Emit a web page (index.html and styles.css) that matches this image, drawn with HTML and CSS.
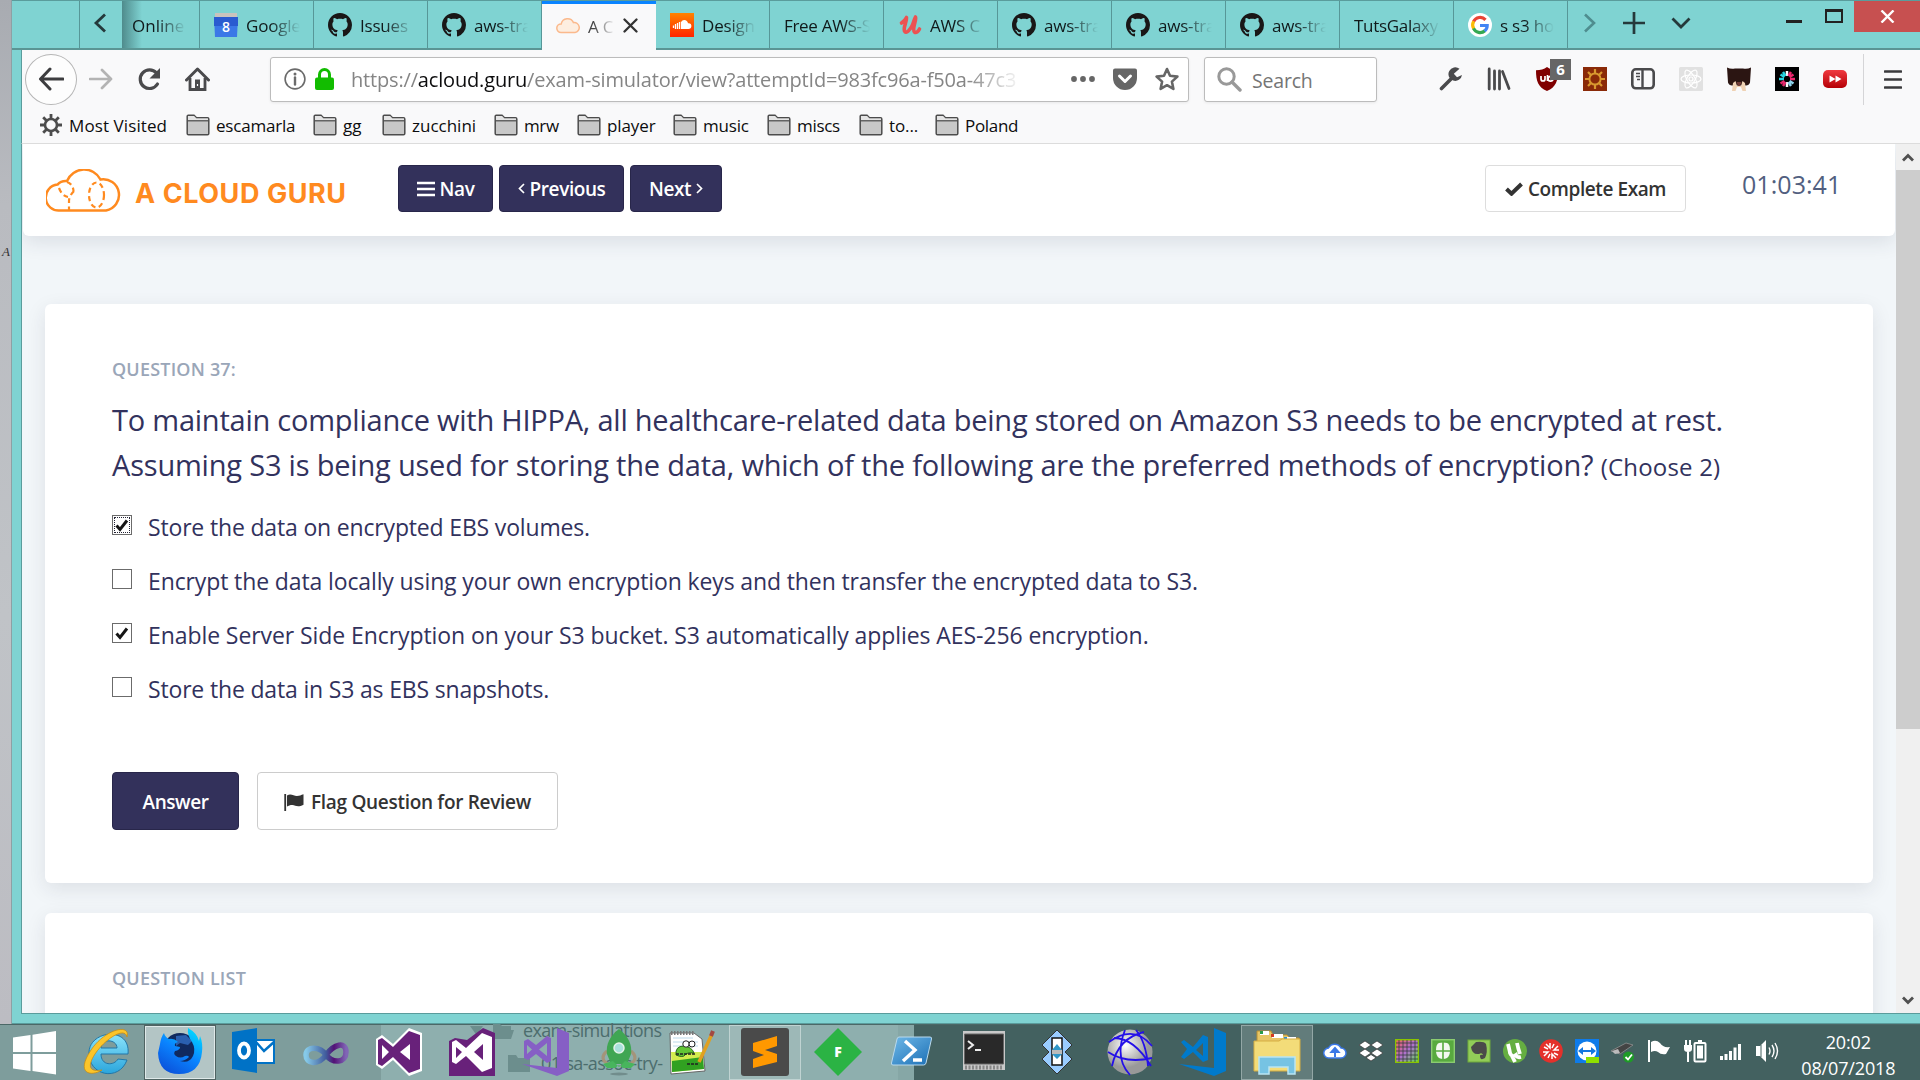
FILE: index.html
```html
<!DOCTYPE html>
<html lang="en">
<head>
<meta charset="utf-8">
<title>A Cloud Guru</title>
<link rel="stylesheet" href="styles.css">
</head>
<body>
<svg class="defs" width="0" height="0">
  <symbol id="github" viewBox="0 0 16 16"><path fill="#191717" d="M8 0C3.58 0 0 3.58 0 8c0 3.54 2.29 6.53 5.47 7.59.4.07.55-.17.55-.38 0-.19-.01-.82-.01-1.49-2.01.37-2.53-.49-2.69-.94-.09-.23-.48-.94-.82-1.13-.28-.15-.68-.52-.01-.53.63-.01 1.08.58 1.23.82.72 1.21 1.87.87 2.33.66.07-.52.28-.87.51-1.07-1.78-.2-3.64-.89-3.64-3.95 0-.87.31-1.59.82-2.15-.08-.2-.36-1.02.08-2.12 0 0 .67-.21 2.2.82.64-.18 1.32-.27 2-.27s1.36.09 2 .27c1.53-1.04 2.2-.82 2.2-.82.44 1.1.16 1.92.08 2.12.51.56.82 1.27.82 2.15 0 3.07-1.87 3.75-3.65 3.95.29.25.54.73.54 1.48 0 1.07-.01 1.93-.01 2.2 0 .21.15.46.55.38A8.01 8.01 0 0 0 16 8c0-4.42-3.58-8-8-8z"/></symbol>
  <symbol id="folder" viewBox="0 0 24 22"><path d="M1.2 19.5V2.2Q1.200 1.200 2.200 1.200H8l2.500 2.600H21.500q1.300 0 1.300 1.300V19.500q0 1.300-1.300 1.300H2.500q-1.300 0-1.300-1.300z" fill="#c8c8c8" stroke="#4c4c4c" stroke-width="1.500"/><path d="M2 2h6l2.500 2.600H22V6H2z" fill="#e4e4e4"/><path d="M1.500 6.800h21" stroke="#4c4c4c" stroke-width="1.200"/></symbol>
</svg>
<div class="screen">
  <div class="desktop"><span class="desktop-label">A</span></div>
  <main class="window">
    <div class="tabbar">
      <div class="tab-lead"></div>
      <div class="tab-scroll"><svg width="14" height="20" viewBox="0 0 14 20"><path d="M12 1.500L3 10l9 8.500" fill="none" stroke="#25393b" stroke-width="2.800"/></svg></div>
      <div class="tab tab-cut"><span class="tab-text">Online</span></div>
      <div class="tab"><svg class="fav" viewBox="0 0 24 24"><path d="M1 0h22v6H1z" fill="#c9c3bd"/><path d="M0 4h24l-1 20H1z" fill="#3b78e7"/><path d="M0 4h24v9H0z" fill="#2a5bd0"/><text x="12" y="19" font-size="14" font-weight="600" text-anchor="middle" fill="#fff">8</text></svg><span class="tab-text">Google</span></div>
      <div class="tab"><svg class="fav"><use href="#github"/></svg><span class="tab-text">Issues</span></div>
      <div class="tab"><svg class="fav"><use href="#github"/></svg><span class="tab-text">aws-tra</span></div>
      <div class="tab active"><svg class="fav" viewBox="0 0 24 24"><path d="M5 18.500a4.300 4.300 0 0 1 .2-8.600 6.500 6.500 0 0 1 12.300-1.300A5 5 0 0 1 19 18.500z" fill="#fdeee0" stroke="#fbb98c" stroke-width="1.500"/></svg><span class="tab-text">A C</span><svg class="tab-close" width="15" height="15" viewBox="0 0 15 15"><path d="M1.500 1.500l12 12M13.500 1.500l-12 12" stroke="#333" stroke-width="2.300" stroke-linecap="round"/></svg></div>
      <div class="tab"><svg class="fav" viewBox="0 0 24 24"><defs><linearGradient id="sc" x2="0" y2="1"><stop stop-color="#ff8300"/><stop offset="1" stop-color="#ff2500"/></linearGradient></defs><path d="M0 0h24v24H0z" fill="url(#sc)"/><path d="M3.500 12.500V15M5.500 11v5M7.500 10v6M9.500 9v7M11.500 8.500V16" stroke="#fff" stroke-width="1.300"/><path d="M12 16V7.700c3-1.700 5.700.2 6 2.600 2.300-.4 3.400 1.100 3.400 2.600 0 1.800-1.200 3.100-3 3.100z" fill="#fff"/></svg><span class="tab-text">Design</span></div>
      <div class="tab"><span class="tab-text wide">Free AWS-S</span></div>
      <div class="tab"><svg class="fav" viewBox="0 0 24 24"><path d="M3.500 10C6.500 8 8 5.500 8.500 4.500 9 9 5 14 6.500 18c1.500 3.500 6-1.500 8-6 1-3 2-6 3-8 1.500 2-4 12-1 15 1.800 1.500 4-1 5-3" fill="none" stroke="#ec5252" stroke-width="3.600" stroke-linecap="round" stroke-linejoin="round"/></svg><span class="tab-text">AWS C</span></div>
      <div class="tab"><svg class="fav"><use href="#github"/></svg><span class="tab-text">aws-tra</span></div>
      <div class="tab"><svg class="fav"><use href="#github"/></svg><span class="tab-text">aws-tra</span></div>
      <div class="tab"><svg class="fav"><use href="#github"/></svg><span class="tab-text">aws-tra</span></div>
      <div class="tab"><span class="tab-text wide">TutsGalaxy</span></div>
      <div class="tab"><svg class="fav" viewBox="0 0 24 24"><circle cx="12" cy="12" r="12" fill="#fff"/><g fill="none" stroke-width="3.200"><path d="M17.500 6.800A7.300 7.300 0 0 0 5.500 8.700" stroke="#ea4335"/><path d="M5.700 8.300a7.400 7.400 0 0 0 0 7.400" stroke="#fbbc05"/><path d="M5.500 15.400a7.300 7.300 0 0 0 11.400 2.300" stroke="#34a853"/><path d="M16.600 17.900a7 7 0 0 0 2.600-5.400H12" stroke="#4285f4"/></g></svg><span class="tab-text">s s3 ho</span></div>
      <div class="tab-tools">
        <svg width="14" height="20" viewBox="0 0 14 20"><path d="M2 1.500l9 8.500-9 8.500" fill="none" stroke="#4f8d8f" stroke-width="2.600"/></svg>
        <svg width="22" height="22" viewBox="0 0 22 22"><path d="M11 0v22M0 11h22" stroke="#25393b" stroke-width="2.700"/></svg>
        <svg width="20" height="12" viewBox="0 0 20 12"><path d="M1.500 1.500l8.500 8.500 8.500-8.500" fill="none" stroke="#25393b" stroke-width="2.800"/></svg>
      </div>
      <div class="caption">
        <svg width="18" height="24" viewBox="0 0 18 24"><path d="M0 19h16v3H0z" fill="#222"/></svg>
        <svg width="18" height="24" viewBox="0 0 18 24"><path d="M1 9.500h16v11.500H1z" fill="none" stroke="#222" stroke-width="2"/><path d="M0 8h18v3H0z" fill="#222"/></svg>
        <div class="close"><svg width="15" height="13" viewBox="0 0 15 13"><path d="M1.500.500l12 12M13.500.500l-12 12" stroke="#fff" stroke-width="2.400"/></svg></div>
      </div>
    </div>

    <div class="toolbar">
      <div class="nav-icons">
        <div class="back"><svg width="26" height="24" viewBox="0 0 26 24"><path d="M25 12H3M12 2L2.500 12l9.500 10" fill="none" stroke="#3d3d3f" stroke-width="3" stroke-linecap="round" stroke-linejoin="round"/></svg></div>
        <svg width="24" height="22" viewBox="0 0 24 22"><path d="M1 11h21M13 2l9 9-9 9" fill="none" stroke="#b3b3b3" stroke-width="2.700" stroke-linecap="round" stroke-linejoin="round"/></svg>
        <svg width="24" height="24" viewBox="0 0 24 24"><path d="M19.500 6A9.300 9.300 0 1 0 20.500 17" fill="none" stroke="#4a4a4c" stroke-width="3.200" stroke-linecap="round"/><path d="M23 1v10.500H12.500z" fill="#4a4a4c"/></svg>
        <svg width="25" height="24" viewBox="0 0 25 24"><path d="M1.500 13L12.500 2l11 11" fill="none" stroke="#4a4a4c" stroke-width="3" stroke-linecap="round" stroke-linejoin="round"/><path d="M5 11v11.500h15V11" fill="none" stroke="#4a4a4c" stroke-width="2.800"/><path d="M10 12.500h5V22h-5z" fill="#4a4a4c"/><path d="M12.500 17v2" stroke="#fff" stroke-width="1.200"/></svg>
      </div>
      <div class="urlbar">
        <svg width="22" height="22" viewBox="0 0 22 22"><circle cx="11" cy="11" r="9.900" fill="none" stroke="#6b6b6b" stroke-width="1.600"/><path d="M11 9.500V16.500" stroke="#6b6b6b" stroke-width="2.400" stroke-linecap="round"/><circle cx="11" cy="6" r="1.500" fill="#6b6b6b"/></svg>
        <svg class="lock" width="19" height="22" viewBox="0 0 19 22"><path d="M4.500 10V6.500a5 5 0 0 1 10 0V10" fill="none" stroke="#12bc00" stroke-width="3"/><rect y="9.500" width="19" height="12.500" rx="2" fill="#12bc00"/></svg>
        <div class="url">https://<b>acloud.guru</b>/exam-simulator/view?attemptId=983fc96a-f50a-47c3</div>
        <svg width="24" height="24" viewBox="0 0 24 24"><g fill="#666"><circle cx="3" cy="12" r="2.900"/><circle cx="12" cy="12" r="2.900"/><circle cx="21" cy="12" r="2.900"/></g></svg>
        <svg width="24" height="24" viewBox="0 0 24 24"><path d="M2 1.500h20a2 2 0 0 1 2 2V11a12 12 0 0 1-24 0V3.500a2 2 0 0 1 2-2z" fill="#666"/><path d="M6.500 9l5.500 5.500L17.500 9" fill="none" stroke="#fff" stroke-width="3" stroke-linecap="round" stroke-linejoin="round"/></svg>
        <svg width="24" height="24" viewBox="0 0 24 24"><path d="M12 2l3 6.800 7.400.8-5.500 5 1.500 7.300L12 18.200l-6.400 3.700 1.500-7.300-5.500-5 7.400-.8z" fill="none" stroke="#666" stroke-width="2.600" stroke-linejoin="round"/></svg>
      </div>
      <div class="search"><svg width="25" height="25" viewBox="0 0 25 25"><circle cx="9.500" cy="9.500" r="7.700" fill="none" stroke="#999" stroke-width="3"/><path d="M15 15l8 8" stroke="#999" stroke-width="3.400" stroke-linecap="round"/></svg><span class="search-text">Search</span></div>
      <div class="extensions">
        <svg viewBox="0 0 24 24"><path d="M2.500 21.500L13 11" stroke="#4a4a4c" stroke-width="3.600" stroke-linecap="round"/><path d="M20.500 1.800A6.800 6.800 0 1 0 23 8l-5 2.200-3.200-3.400z" fill="#4a4a4c"/></svg>
        <svg viewBox="0 0 24 24"><path d="M2.200 2v20M7.500 4v18M12.500 4v18M15.500 4.500L22 21.500" stroke="#4a4a4c" stroke-width="2.800" stroke-linecap="round"/></svg>
        <div class="ublock"><svg viewBox="0 0 24 24"><path d="M12 0c3 2.500 6.500 3 11 3.200C23 14 21 20 12 24 3 20 1 14 1 3.200 5.500 3 9 2.500 12 0z" fill="#800000"/><path d="M6 9v3a2 2 0 0 0 4 0V9M12.500 8v6" stroke="#fff" stroke-width="1.700" fill="none"/><circle cx="15.500" cy="11.800" r="2.400" fill="none" stroke="#fff" stroke-width="1.700"/></svg><span class="count">6</span></div>
        <svg viewBox="0 0 24 24"><path d="M0 0h24v24H0z" fill="#8a2a08"/><circle cx="12" cy="12" r="5.600" fill="none" stroke="#d8982f" stroke-width="2"/><path d="M12 2v4M12 18v4M2 12h4M18 12h4M5 5l3 3M16 16l3 3M5 19l3-3M16 8l3-3" stroke="#d8982f" stroke-width="2.200"/></svg>
        <svg viewBox="0 0 24 24"><rect x="1.300" y="2.300" width="21.400" height="19" rx="3.500" fill="none" stroke="#4a4a4c" stroke-width="2.600"/><path d="M11.500 3v18" stroke="#4a4a4c" stroke-width="2.400"/><path d="M5 6.500h4M5 9.500h4M6 12.500h3" stroke="#4a4a4c" stroke-width="1.500"/></svg>
        <svg viewBox="0 0 24 24"><rect width="24" height="24" rx="1.500" fill="#e1e1e1"/><g fill="none" stroke="#fff" stroke-width="1.200"><ellipse cx="12" cy="12" rx="10" ry="4"/><ellipse cx="12" cy="12" rx="10" ry="4" transform="rotate(60 12 12)"/><ellipse cx="12" cy="12" rx="10" ry="4" transform="rotate(120 12 12)"/><circle cx="12" cy="12" r="2"/></g></svg>
        <svg viewBox="0 0 24 24"><path d="M0 .500q4 2 8 1h8q4 1 8-1l-1 15q-1 3-4 3H5q-3 0-4-3z" fill="#2b1512"/><path d="M5 24l1-8 2.500-2 1.500 5h4l1.500-5 2.500 2 1 8h-3.500l-1.500-4h-4L8.500 24z" fill="#efd2b4"/><path d="M9.500 15h5L13 19h-2z" fill="#713c37"/></svg>
        <svg viewBox="0 0 24 24"><path d="M0 0h24v24H0z" fill="#000"/><g stroke-width="2.500"><path d="M12 4v5M12 15v5" stroke="#fff"/><path d="M4 12h5M5.500 7.500l4 2.500M8 5l2.500 4" stroke="#27d3df"/><path d="M15 12h5M14.500 10l4-2.500M13.500 9L16 5" stroke="#f0266f"/><path d="M5.500 16.500l4-2.500M8 19l2.500-4" stroke="#e4296b"/><path d="M18.500 16.500l-4-2.500M16 19l-2.500-4" stroke="#8fd6ef"/></g></svg>
        <svg viewBox="0 0 24 24"><defs><linearGradient id="yt" x2="0" y2="1"><stop stop-color="#f03a40"/><stop offset="1" stop-color="#b50006"/></linearGradient></defs><rect y="3" width="24" height="18" rx="5" fill="url(#yt)"/><path d="M6.500 8.500l6 3.500-6 3.500zM12.500 8.500l6 3.500-6 3.500z" fill="#fff"/></svg>
      </div>
      <div class="menu"><svg width="18" height="19" viewBox="0 0 18 19"><path d="M1 1.500h16M1 9.500h16M1 17.500h16" stroke="#3a3a3c" stroke-width="2.600" stroke-linecap="round"/></svg></div>
    </div>

    <div class="bookmarks">
      <div class="bm"><svg width="22" height="22" viewBox="0 0 22 22"><circle cx="11" cy="11" r="6" fill="none" stroke="#4c4c4c" stroke-width="2.600"/><path d="M11 0v4.500M11 17.500V22M0 11h4.500M17.500 11H22M3.200 3.200l3.200 3.200M15.600 15.600l3.200 3.200M3.200 18.800l3.200-3.200M15.600 6.400l3.200-3.200" stroke="#4c4c4c" stroke-width="2.800"/></svg><span>Most Visited</span></div>
      <div class="bm"><svg width="24" height="22"><use href="#folder"/></svg><span>escamarla</span></div>
      <div class="bm"><svg width="24" height="22"><use href="#folder"/></svg><span>gg</span></div>
      <div class="bm"><svg width="24" height="22"><use href="#folder"/></svg><span>zucchini</span></div>
      <div class="bm"><svg width="24" height="22"><use href="#folder"/></svg><span>mrw</span></div>
      <div class="bm"><svg width="24" height="22"><use href="#folder"/></svg><span>player</span></div>
      <div class="bm"><svg width="24" height="22"><use href="#folder"/></svg><span>music</span></div>
      <div class="bm"><svg width="24" height="22"><use href="#folder"/></svg><span>miscs</span></div>
      <div class="bm"><svg width="24" height="22"><use href="#folder"/></svg><span>to...</span></div>
      <div class="bm"><svg width="24" height="22"><use href="#folder"/></svg><span>Poland</span></div>
    </div>

    <div class="viewport">
      <div class="page">
        <header class="header">
          <svg class="cloud" width="75" height="43" viewBox="0 0 75 43"><path d="M14 41.500A13 13 0 0 1 11.500 15.600Q15 11.500 21 12A18.500 18.500 0 0 1 54.500 10.500 15.500 15.500 0 0 1 60 41.500z" fill="none" stroke="#ff8a1f" stroke-width="2.500"/><g fill="none" stroke="#ff8a1f" stroke-width="2.200" stroke-dasharray="5 3.500"><path d="M21 13q6 2 6.500 9M13 19q3 8 9 9M28 22q-5 5-5 10v9"/><ellipse cx="50.500" cy="26" rx="7.500" ry="12.500"/></g></svg>
          <span class="brand">A CLOUD GURU</span>
          <div class="header-nav">
            <button class="btn dark nav"><svg width="18" height="16" viewBox="0 0 18 16"><path d="M0 2h18M0 8h18M0 14h18" stroke="#fff" stroke-width="2.700"/></svg>Nav</button>
            <button class="btn dark prev"><svg width="7" height="11" viewBox="0 0 7 11"><path d="M6 1L1.500 5.500 6 10" fill="none" stroke="#fff" stroke-width="1.700"/></svg>Previous</button>
            <button class="btn dark next">Next<svg width="7" height="11" viewBox="0 0 7 11"><path d="M1 1l4.500 4.500L1 10" fill="none" stroke="#fff" stroke-width="1.700"/></svg></button>
          </div>
          <button class="btn light complete"><svg width="18" height="14" viewBox="0 0 18 14"><path d="M1.500 7l5 4.700L16.500 2" fill="none" stroke="#333" stroke-width="4"/></svg>Complete Exam</button>
          <time class="timer">01:03:41</time>
        </header>
        <section class="card question">
          <h2 class="label">QUESTION 37:</h2>
          <p class="title">To maintain compliance with HIPPA, all healthcare-related data being stored on Amazon S3 needs to be encrypted at rest.<br><span class="line2">Assuming S3 is being used for storing the data, which of the following are the preferred methods of encryption?</span> <small>(Choose 2)</small></p>
          <ul class="options">
            <li><i class="box focus"><svg width="14" height="13" viewBox="0 0 14 13"><path d="M1.500 6.500L5 10.500 12 1.500" fill="none" stroke="#151515" stroke-width="3"/></svg></i><span>Store the data on encrypted EBS volumes.</span></li>
            <li><i class="box"></i><span>Encrypt the data locally using your own encryption keys and then transfer the encrypted data to S3.</span></li>
            <li><i class="box"><svg width="14" height="13" viewBox="0 0 14 13"><path d="M1.500 6.500L5 10.500 12 1.500" fill="none" stroke="#151515" stroke-width="3"/></svg></i><span>Enable Server Side Encryption on your S3 bucket. S3 automatically applies AES-256 encryption.</span></li>
            <li><i class="box"></i><span>Store the data in S3 as EBS snapshots.</span></li>
          </ul>
          <div class="actions">
            <button class="btn dark answer">Answer</button>
            <button class="btn light flag"><svg width="20" height="18" viewBox="0 0 20 18"><path d="M1.200 1v17" stroke="#333" stroke-width="1.800"/><path d="M3 2.500c4-2.500 7 .8 10 .6 2.500-.1 4-1 6.500-1.800v10.500c-6 3-8 .5-11 .2-2-.1-4 .6-5.500 1.500z" fill="#333"/></svg>Flag Question for Review</button>
          </div>
        </section>
        <section class="card list"><h2 class="label">QUESTION LIST</h2></section>
      </div>
      <div class="scrollbar">
        <div class="sb-btn"><svg width="12" height="9" viewBox="0 0 12 9"><path d="M1 7.500l5-5 5 5" fill="none" stroke="#505050" stroke-width="2.800"/></svg></div>
        <div class="thumb"></div>
        <div class="sb-btn bottom"><svg width="12" height="9" viewBox="0 0 12 9"><path d="M1 1.500l5 5 5-5" fill="none" stroke="#505050" stroke-width="2.800"/></svg></div>
      </div>
    </div>
  </main>

  <footer class="taskbar">
    <div class="ghost">
      <div class="ghost-row"><svg width="13" height="9" viewBox="0 0 13 9"><path d="M0 0h13L6.500 9z" fill="#6c8e8d"/></svg><svg width="22" height="16" viewBox="0 0 22 16"><path d="M1 1h7l2 2h9v4h3l-3 9H1z" fill="#6c8e8d"/></svg><span>exam-simulations</span></div>
      <div class="ghost-row sub"><svg width="22" height="17" viewBox="0 0 22 17"><path d="M0 0h8l2 3h12v14H0z" fill="#6c8e8d"/></svg><span>01-sa-assoc-try-</span></div>
    </div>
    <div class="start"><svg width="44" height="44" viewBox="0 0 44 44"><path d="M0 6.500L17.500 4v17H0zM19.500 3.700L43 0v21H19.500zM0 23h17.500v17L0 37.500zM19.500 23H43v20.500L19.500 40z" fill="#fff"/></svg></div>
    <div class="app"><svg viewBox="0 0 48 48"><defs><linearGradient id="ie" x2="0" y2="1"><stop stop-color="#8be4fb"/><stop offset="1" stop-color="#2aa5dc"/></linearGradient></defs><path d="M45 26H18c0 12 13 12 17 5l9 1C36 54 5 48 6 24 7 2 48-2 45 26zM18 20h16C34 11 18 10 18 20z" fill="url(#ie)" stroke="#2277a8"/><path d="M44 9C48-5 22 1 8 22-8 46 8 49 19 42 8 44 3 40 12 26 22 11 42-2 44 9z" fill="#fcc52a" stroke="#c98a0c" stroke-width=".7"/></svg></div>
    <div class="app on"><svg viewBox="0 0 48 48"><defs><linearGradient id="ff" x1=".8" x2=".2" y2="1"><stop stop-color="#00dcff"/><stop offset=".5" stop-color="#0a84ff"/><stop offset="1" stop-color="#0b4fd8"/></linearGradient></defs><circle cx="24" cy="22" r="17" fill="#10295f"/><path d="M20 8l10-1 6 6-4 4-8-2-4 3z" fill="#2a5fb0"/><path d="M4 16Q5 9 8 5q1 4 5 6 5-1 9 3-4 1-3 4l5 1q0 3-5 4-2 3 1 5 4 3 9 0 3-1 4 1-4 4-9 4 9 3 13-5 3-7-1-14-5-7-4-14 9 5 11 13l1-5q3 7 2 16-2 22-23 22Q3 46 2 25z" fill="url(#ff)"/></svg></div>
    <div class="app"><svg viewBox="0 0 48 48"><path d="M26 12h19v23H26z" fill="#fff" stroke="#0072c6" stroke-width="2"/><path d="M27 14l8 9 10-9" fill="none" stroke="#0072c6" stroke-width="2.500"/><path d="M3 4l25-4v45L3 41z" fill="#0072c6"/><ellipse cx="15" cy="22.500" rx="5" ry="7" fill="none" stroke="#fff" stroke-width="3.800"/></svg></div>
    <div class="app"><svg viewBox="0 0 48 48"><defs><linearGradient id="inf"><stop stop-color="#86cae8"/><stop offset=".5" stop-color="#405b9c"/><stop offset=".7" stop-color="#531176"/><stop offset="1" stop-color="#8066b5"/></linearGradient></defs><path d="M24 27C18 18 4 18 4 27s12 11 20 0 20-14 20-3-13 12-20 3z" fill="none" stroke="url(#inf)" stroke-width="5.500"/></svg></div>
    <div class="app"><svg viewBox="0 0 48 48"><path d="M1 11l6-4 11 9L34 0l13 5v38l-13 5-16-16-11 9-6-4z" fill="#fff"/><path d="M3 12l4-2 11 9L34 3l11 4v34l-11 4-16-16-11 9-4-2z" fill="#68217a"/><path d="M7 17v14l7-7zM25 24l10 8V16z" fill="#fff"/></svg></div>
    <div class="app"><svg viewBox="0 0 48 48"><path d="M1 13l6-3 12 2L35 0l12 5v43H1z" fill="#68217a"/><path d="M4 14l4-2 10 8L34 5l10 4v31l-10 4-16-16-10 8-4-2zM8 19v11l6-6zM26 24l9 8V16z" fill="#fff" fill-rule="evenodd"/></svg></div>
    <div class="app"><svg viewBox="0 0 48 48"><path d="M35 0l12 5v38l-12 5L0 36l35 4zM2 13l4-2 8 6L25 8l4 2v23l-4 2-11-9-8 6-4-2zM5 17v9l5-4.500zM25 15l-8 6.500 8 6.500z" fill="#865fc5" fill-rule="evenodd"/></svg></div>
    <div class="app"><svg viewBox="0 0 48 48"><path d="M12 23q-6 5-3 10l4 3M36 23q6 5 3 10l-4 3" fill="none" stroke="#a4947a" stroke-width="3"/><path d="M24 1Q10 12 12 26l4 10h16l4-10Q38 12 24 1z" fill="#3fa653"/><path d="M8 36l10-3 6 6 6-6 10 3-4 4H28l-4-3-4 3h-8z" fill="#48b55d"/><circle cx="24" cy="20" r="5" fill="#a9e0db" stroke="#e3f3e8" stroke-width="1.500"/><ellipse cx="24" cy="46" rx="9" ry="1.500" fill="#718d8c"/></svg></div>
    <div class="app"><svg viewBox="0 0 48 48"><path d="M2 5h24l8 6 3 32-34 3z" fill="#fff" stroke="#666"/><path d="M3 24h31l1 17L4 44z" fill="#d3ec4e"/><path d="M4 33l31-4 1 12L4 44z" fill="#31a121"/><path d="M5 10h20M5 14h25M5 18h25" stroke="#bcd9ea"/><path d="M3 5h24" stroke="#777" stroke-width="4" stroke-dasharray="1.500 1.500"/><path d="M8 27q-1-9 8-9 8 1 10 7-7-1-9 2t-9 0z" fill="#63c536" stroke="#25651b"/><circle cx="18" cy="16" r="3.200" fill="#fff" stroke="#222"/><circle cx="24" cy="16" r="3" fill="#fff" stroke="#222"/><path d="M8 26h20M19 36h11" stroke="#222" stroke-width="1.500" stroke-dasharray="3 1"/><path d="M44 6L31 34" stroke="#e1a020" stroke-width="3.500"/><path d="M45 3l-2 5" stroke="#a34942" stroke-width="4"/></svg></div>
    <div class="app on dim"><svg viewBox="0 0 48 48"><rect width="48" height="48" rx="3" fill="#4a4a4a"/><path d="M36 8v10L24 22l12 4v8l-24 6V31l11-4-11-4v-8z" fill="#ff9800"/></svg></div>
    <div class="app"><svg viewBox="0 0 48 48"><path d="M24 0l24 24-24 24L0 24z" fill="#2bb344"/><text x="24" y="29" font-size="14" font-weight="800" text-anchor="middle" fill="#fff">F</text></svg></div>
    <div class="app"><svg viewBox="0 0 48 48"><defs><linearGradient id="ps" x2="1" y2="1"><stop stop-color="#6fb9e8"/><stop offset="1" stop-color="#1c6fb5"/></linearGradient></defs><path d="M12 9h31q2 0 1.500 2L39 35q-.5 2-2.500 2H6q-2 0-1.500-2L10 11q.5-2 2-2z" fill="url(#ps)" stroke="#b9d9ec"/><path d="M18 13l10 9-12 11M26 32h9" fill="none" stroke="#fff" stroke-width="3.400"/></svg></div>
    <div class="app"><svg viewBox="0 0 48 48"><path d="M3 3h42v39H3z" fill="#c9c9c9"/><path d="M4.500 6h39v30h-39z" fill="#292929" stroke="#666"/><path d="M8 13l5 4-5 4M15 22h6" fill="none" stroke="#eee" stroke-width="2"/><path d="M5 39.500h38" stroke="#888" stroke-width="4" stroke-dasharray="2 1.500"/></svg></div>
    <div class="app"><svg viewBox="0 0 48 48"><path d="M24 2l15 15-7 7 7 7-15 15L9 31l7-7-7-7z" fill="#99ccff" stroke="#333"/><path d="M19 10h10v27H19z" fill="#fff" stroke="#111" stroke-width="1.500"/><path d="M19 22h10v4H19z" fill="#bbb"/><path d="M24 16l5 6H19zM19 26h10l-5 5z" fill="#3097c9"/></svg></div>
    <div class="app"><svg viewBox="0 0 48 48"><defs><radialGradient id="sp" cx=".4" cy=".35"><stop stop-color="#fff"/><stop offset="1" stop-color="#999"/></radialGradient></defs><circle cx="24" cy="24" r="22.500" fill="url(#sp)"/><g fill="none" stroke="#2410e8" stroke-width="1.800"><path d="M2 24Q20 36 46 30M8 10Q28 10 45 38M38 4Q12 10 6 38M19 2Q8 30 24 47M30 2q10 12 12 36M3 14Q28-4 46 18"/></g></svg></div>
    <div class="app"><svg viewBox="0 0 48 48"><path d="M35 0l12 5v38l-12 5L0 36l35 4zM2 14l3-2 9 7L24 7l5 2v23l-5 2-10-10-9 7-3-2 6-8zM24 15l-7 7 7 6z" fill="#007acc" fill-rule="evenodd"/></svg></div>
    <div class="app on faint"><svg viewBox="0 0 48 48"><path d="M4 3h14l2 4h14l3 3h9v16H4z" fill="#e7c666" stroke="#b88f32"/><path d="M7 3h9v4H7zM19 6h11v4H19zM31 9h12v4H31z" fill="#fff"/><path d="M7 3h3v3H7z" fill="#2a9d4a"/><path d="M18 6h3v3h-3z" fill="#d43a22"/><path d="M31 9h3v3h-3z" fill="#2f8ed0"/><path d="M1 13h25l3-2h18v32H1z" fill="#f3dc79" stroke="#d5ad42"/><path d="M6 29h36v17h-7v-7H16v7H6z" fill="#76c3e3" stroke="#b9e5f4" stroke-width="1.500"/></svg></div>

    <div class="tray">
      <svg viewBox="0 0 24 24"><path d="M6 19a5 5 0 0 1-.5-10A7 7 0 0 1 18 9a5 5 0 0 1 0 10z" fill="#fff" stroke="#3b78e7" stroke-width="1.500"/><path d="M12 18v-6M8.500 13L12 9l3.500 4z" stroke="#3b78e7" stroke-width="2" fill="#3b78e7"/></svg>
      <svg viewBox="0 0 24 24"><path d="M6 2l6 4-6 4-6-4zM18 2l6 4-6 4-6-4zM6 10l6 4-6 4-6-4zM18 10l6 4-6 4-6-4zM12 15.500l5 3.300-5 3.200-5-3.200z" fill="#fff" stroke="#333" stroke-width=".7"/></svg>
      <svg viewBox="0 0 24 24"><defs><linearGradient id="gr" x2="1" y2="1"><stop stop-color="#f0605a"/><stop offset=".5" stop-color="#b070d0"/><stop offset="1" stop-color="#5fe050"/></linearGradient></defs><path d="M.7.700h22.600v22.600H.7z" fill="url(#gr)" stroke="#8ac400" stroke-width="1.400"/><path d="M1 4h22M1 8h22M1 12h22M1 16h22M1 20h22M4 1v22M8 1v22M12 1v22M16 1v22M20 1v22" stroke="#333c3c" stroke-width=".8"/></svg>
      <svg viewBox="0 0 24 24"><rect x=".7" y=".7" width="22.600" height="22.600" fill="#58aa3f" stroke="#8bcc70" stroke-width="1.400"/><path d="M8 4q4-1 8 0 3 1 3 7 0 6-3 8-4 2-8 0-3-2-3-8 0-6 3-7z" fill="#f3f8f0"/><path d="M12 3v17M5 12h14" stroke="#58aa3f" stroke-width="1.600"/></svg>
      <svg viewBox="0 0 24 24"><rect x="1" y="1" width="22" height="22" fill="#92cc58" stroke="#6ea93b"/><path d="M4 8l5-5q8-1 10 2 2 8-1 14-5 3-5-2 0-2 3-1-1-3-4-1-7 1-8-7z" fill="#4a4a4a"/></svg>
      <svg viewBox="0 0 24 24"><circle cx="12" cy="12" r="12" fill="#65ae41"/><path d="M5 5q2 8 2 9 2 5 6 2 1 3 5 2M9 17l3 6M14 4q1 5 3 11" fill="none" stroke="#fff" stroke-width="3.800"/></svg>
      <svg viewBox="0 0 24 24"><circle cx="12" cy="12" r="11.800" fill="#e4312b"/><path d="M11 4v5L7 5M20 11h-5l4-4M13 20v-5l4 4M4 13h5l-4 4M15 5l-2 4M19 16l-4-2M9 19l2-4M5 8l4 2" stroke="#fff" stroke-width="1.500" fill="none"/></svg>
      <svg viewBox="0 0 24 24"><path d="M0 0h24v24H0z" fill="#0e7be9"/><circle cx="12" cy="12" r="9.500" fill="#fff"/><path d="M3 12l5-4v3h8V8l5 4-5 4v-3H8v3z" fill="#1477df"/><path d="M11 18h13v6H11z" fill="#8fe000"/></svg>
      <svg viewBox="0 0 24 24"><path d="M0 12L15 4l7 2-13 9z" fill="#444" stroke="#999" stroke-width=".7"/><path d="M1 12l6-2 2 4-5 1z" fill="#bbb"/><circle cx="17.500" cy="18" r="5.500" fill="#1e9b26"/><path d="M14.500 18l2.500 2.500 4-5" fill="none" stroke="#fff" stroke-width="1.800"/></svg>
      <svg viewBox="0 0 24 24"><path d="M2 1v22" stroke="#fff" stroke-width="2"/><path d="M4 3q5-3 9 1 3 5 10 4l-4 7q-5 1-8-2-3-2-7 0z" fill="#fff"/></svg>
      <svg viewBox="0 0 24 24"><rect x="11.500" y="4" width="11" height="18.500" rx="1" fill="none" stroke="#fff" stroke-width="2"/><path d="M14 6.500h6v13h-6zM15 1h4v3h-4zM1 6h8v4q0 3-4 3T1 10zM2 1h2v5H2zM6 1h2v5H6zM4 13h2v10H4z" fill="#fff"/></svg>
      <svg viewBox="0 0 24 24"><path d="M1 17h3v4H1zM5.500 15h3v6h-3zM10 12h3v9h-3zM14.500 8.500h3V21h-3zM19 5h3v16h-3z" fill="#fff"/></svg>
      <svg viewBox="0 0 24 24"><path d="M1 7h4l6-6v22l-6-6H1z" fill="#fff"/><path d="M6 6v12" stroke="#446260"/><path d="M14 8.500q2 3.500 0 7M17 6q4 6 0 12M20 4q5 8 0 16" fill="none" stroke="#fff" stroke-width="1.400"/></svg>
    </div>
    <div class="clock"><span>20:02</span><span>08/07/2018</span></div>
  </footer>
</div>
</body>
</html>
```
FILE: styles.css
```css
* { box-sizing: border-box; }
body { margin: 0; font-family: "Open Sans", "Noto Sans", sans-serif; overflow: hidden; }
button { font: inherit; }
svg { flex: none; display: block; }
.defs { position: absolute; }
.screen { width: 1920px; height: 1080px; display: grid; grid-template: 1024px 56px / 12px 1908px; }
.desktop { background: linear-gradient(#a8abb1, #b9bbc0 20%, #c0c3c7 60%, #bcbcc2); border-right: 1px solid #8ea0a4; padding: 239px 0 0 2px; }
.desktop-label { font: italic 13px "Liberation Serif", serif; color: #333; }
.window { background: #7fd3d2; border-top: 1px solid #5a9c9c; border-bottom: 1px solid #5a9c9c; display: flex; flex-direction: column; overflow: hidden; }

.tabbar { height: 49px; display: flex; font-size: 17px; color: #10191a; }
.tab-lead { width: 68px; border-right: 1px solid #579798; }
.tab-scroll { width: 42px; display: flex; align-items: center; justify-content: center; padding: 0 3px 3px 0; }
.tab { width: 114px; flex: none; padding: 0 13px 0 14px; display: flex; align-items: center; gap: 8px; border-right: 1px solid #579798; border-bottom: 2px solid #5a9594; overflow: hidden; }
.tab-lead, .tab-scroll, .tab-tools { border-bottom: 2px solid #5a9594; }
.fav { width: 24px; height: 24px; }
.tab-text { flex: 1; white-space: nowrap; overflow: hidden; letter-spacing: -.2px; line-height: 26px; margin-top: 2px; -webkit-mask-image: linear-gradient(90deg, #000 45%, transparent); mask-image: linear-gradient(90deg, #000 45%, transparent); }
.tab-text.wide { letter-spacing: -.3px; -webkit-mask-image: linear-gradient(90deg, #000 65%, transparent); mask-image: linear-gradient(90deg, #000 65%, transparent); }
.tab-cut { width: 78px; padding-left: 10px; background: linear-gradient(90deg, #4f8b8c, #7fd3d2 20px); }
.tab-cut .tab-text { letter-spacing: 0; }
.tab.active { background: #f9f9fa; border: 0; box-shadow: inset 0 3px #0a84ff; color: #444; padding-right: 18px; }
.active .tab-text { -webkit-mask-image: linear-gradient(90deg, #000 20%, transparent); mask-image: linear-gradient(90deg, #000 20%, transparent); }
.tab-tools { flex: 1; display: flex; align-items: center; gap: 26px; padding: 0 0 3px 15px; }
.caption { display: flex; gap: 21px; border-bottom: 2px solid #5a9594; }
.close { width: 66px; height: 31px; margin-left: -10px; background: #c75050; display: flex; align-items: center; justify-content: center; }

.toolbar { height: 58px; margin-left: 9px; background: #f9f9fa; display: flex; align-items: center; border-left: 1px solid #5a9c9c; }
.nav-icons { width: 248px; display: flex; align-items: center; gap: 24px; padding-left: 3px; }
.back { width: 52px; height: 51px; border: 1px solid #b5b5b5; border-radius: 50%; background: #fdfdfd; display: flex; align-items: center; justify-content: center; margin-right: -12px; }
.urlbar, .search { height: 45px; background: #fff; border: 1px solid #bcbcbc; border-radius: 3px; box-shadow: 0 1px 3px #0001; display: flex; align-items: center; }
.urlbar { width: 919px; padding: 0 9px 0 13px; gap: 18px; }
.lock { margin-left: -9px; }
.url { flex: 1; font-size: 20px; line-height: 30px; letter-spacing: -.17px; color: #858585; white-space: nowrap; overflow: hidden; margin: 2px 17px 0 -1px; -webkit-mask-image: linear-gradient(90deg, #000 90%, transparent 98%); mask-image: linear-gradient(90deg, #000 90%, transparent 98%); }
.url b { font-weight: 400; color: #0c0c0d; }
.search { width: 173px; margin-left: 15px; padding-left: 12px; gap: 10px; color: #757575; font-size: 19.5px; letter-spacing: -.2px; }
.search-text { margin-top: 2px; }
.extensions { margin-left: 62px; display: flex; gap: 24px; }
.extensions svg { width: 24px; height: 24px; }
.ublock { position: relative; }
.count { position: absolute; left: 15px; top: -8px; width: 21px; height: 21px; background: #666; color: #fff; font-size: 15px; font-weight: 700; line-height: 20px; text-align: center; }
.menu { margin-left: 16px; width: 56px; height: 51px; border-left: 1px solid #d5d5d7; display: flex; align-items: center; padding-left: 20px; }

.bookmarks { height: 36px; margin-left: 9px; background: #f9f9fa; border-left: 1px solid #5a9c9c; border-bottom: 1px solid #dcdcdc; display: flex; font-size: 17px; padding: 0 0 1px 18px; color: #0c0c0d; }
.bm { display: flex; align-items: center; gap: 6px; white-space: nowrap; width: 94px; letter-spacing: -.1px; }
.bm:nth-child(1) { width: 146px; gap: 7px; letter-spacing: .1px; }
.bm:nth-child(2) { width: 127px; letter-spacing: -.2px; }
.bm:nth-child(3) { width: 69px; }
.bm:nth-child(4) { width: 112px; letter-spacing: 0; }
.bm:nth-child(5) { width: 83px; letter-spacing: -.4px; }
.bm:nth-child(6) { width: 96px; }
.bm:nth-child(7) { width: 94px; letter-spacing: -.2px; }
.bm:nth-child(8) { width: 92px; letter-spacing: -.3px; }
.bm:nth-child(9) { width: 76px; }
.bm:nth-child(10) { letter-spacing: -.3px; }

.viewport { height: 870px; margin-left: 9px; border-left: 1px solid #5a9c9c; border-bottom: 1px solid #5a9c9c; display: flex; }
.page { flex: 1; background: #f2f6f9; overflow: hidden; display: flex; flex-direction: column; }
.header { height: 92px; flex: none; margin: 0 1px; background: #fff; border-radius: 0 0 6px 6px; box-shadow: 0 6px 20px #2c2f501e; display: flex; align-items: flex-start; padding: 21px 56px 0 23px; }
.cloud { margin-top: 4px; }
.brand { font: 700 27px/36px Inter, sans-serif; color: #ff8a1f; width: 263px; padding-left: 14px; margin-top: 11px; letter-spacing: .55px; white-space: nowrap; }
.header-nav { display: flex; gap: 6px; margin-left: 14px; }
.btn { height: 47px; display: flex; align-items: center; justify-content: center; gap: 5px; padding: 0; border-radius: 4px; font-size: 19px; font-weight: 600; white-space: nowrap; letter-spacing: -.42px; }
.dark { background: #33315b; border: 1px solid #28264a; color: #fff; }
.light { background: #fff; border: 1px solid #ddd; color: #333; }
.nav { width: 95px; }
.prev { width: 125px; }
.next { width: 92px; }
.complete { width: 201px; margin-left: auto; }
.timer { margin-left: 56px; width: 97px; font-size: 25px; letter-spacing: .05px; line-height: 38px; color: #525f7f; }
.card { margin: 0 23px 0 23px; background: #fff; border-radius: 6px; box-shadow: 0 6px 20px #23283c1a; padding: 52px 67px 0; flex: none; }
.question { margin-top: 68px; height: 579px; }
.list { margin-top: 30px; height: 200px; }
.label { margin: 0; font-size: 18px; line-height: 26px; font-weight: 600; letter-spacing: .2px; color: #9aa6b8; }
.title { margin: 15px 0 0; font-size: 29px; letter-spacing: -.23px; line-height: 45px; color: #32325d; white-space: nowrap; }
.line2 { letter-spacing: -.2px; }
.title small { font-size: 24px; letter-spacing: .2px; }
.options { list-style: none; margin: 20px 0 0; padding: 0; font-size: 23px; letter-spacing: -.12px; color: #32325d; }
.options li { height: 54px; display: flex; gap: 16px; line-height: 36px; white-space: nowrap; }
.options li:nth-child(1), .options li:nth-child(4) { letter-spacing: -.17px; }
.options li:nth-child(3) { letter-spacing: -.08px; }
.box { width: 20px; height: 20px; border: 1px solid #6b6b6b; margin-top: 6px; display: flex; align-items: center; justify-content: center; }
.focus { outline: 1px dotted #223; outline-offset: -3px; }
.actions { display: flex; gap: 18px; margin-top: 47px; }
.actions .btn { height: 58px; padding-top: 2px; }
.answer { width: 127px; }
.flag { width: 301px; border-color: #ccc; gap: 7px; letter-spacing: -.3px; }
.scrollbar { width: 24px; background: #f0f0f0; display: flex; flex-direction: column; }
.sb-btn { height: 26px; display: flex; align-items: center; justify-content: center; }
.thumb { height: 559px; background: #cdcdcd; }
.bottom { margin-top: auto; }

.taskbar { grid-column: 1 / 3; position: relative; display: flex; border-top: 1px solid #4c6867; background: linear-gradient(90deg, #7e9d9c 381px, #8eafae 381px 898px, #86a7a6 898px 914px, #436160 914px); }
.ghost { position: absolute; left: 470px; top: -11px; display: flex; flex-direction: column; font-size: 18px; letter-spacing: -.65px; line-height: 33px; color: #4c6d6d; }
.ghost-row { display: flex; align-items: center; gap: 9px; }
.sub { padding-left: 38px; gap: 11px; }
.start { width: 71px; padding: 6px 0 0 13px; }
.app { width: 72px; margin-right: 1.1px; height: 55px; flex: none; display: flex; align-items: center; justify-content: center; position: relative; padding-bottom: 1px; }
.app svg { width: 48px; height: 48px; }
.on { background: #b3c5c5; border: 1px solid #4f6362; box-shadow: inset 0 0 0 1px #dfe9e9; }
.dim { background: #9db8b7; box-shadow: none; border-color: #c0d3d2; }
.faint { background: #627c7b; box-shadow: none; border-color: #93a7a6; }
.tray { display: flex; align-items: center; gap: 12px; margin-left: 9px; padding-bottom: 3px; }
.tray svg { width: 24px; height: 24px; }
.clock { flex: 1; display: flex; flex-direction: column; align-items: center; font-size: 18px; line-height: 26px; letter-spacing: -.15px; color: #fff; padding: 4px 2px 0 0; }
```
